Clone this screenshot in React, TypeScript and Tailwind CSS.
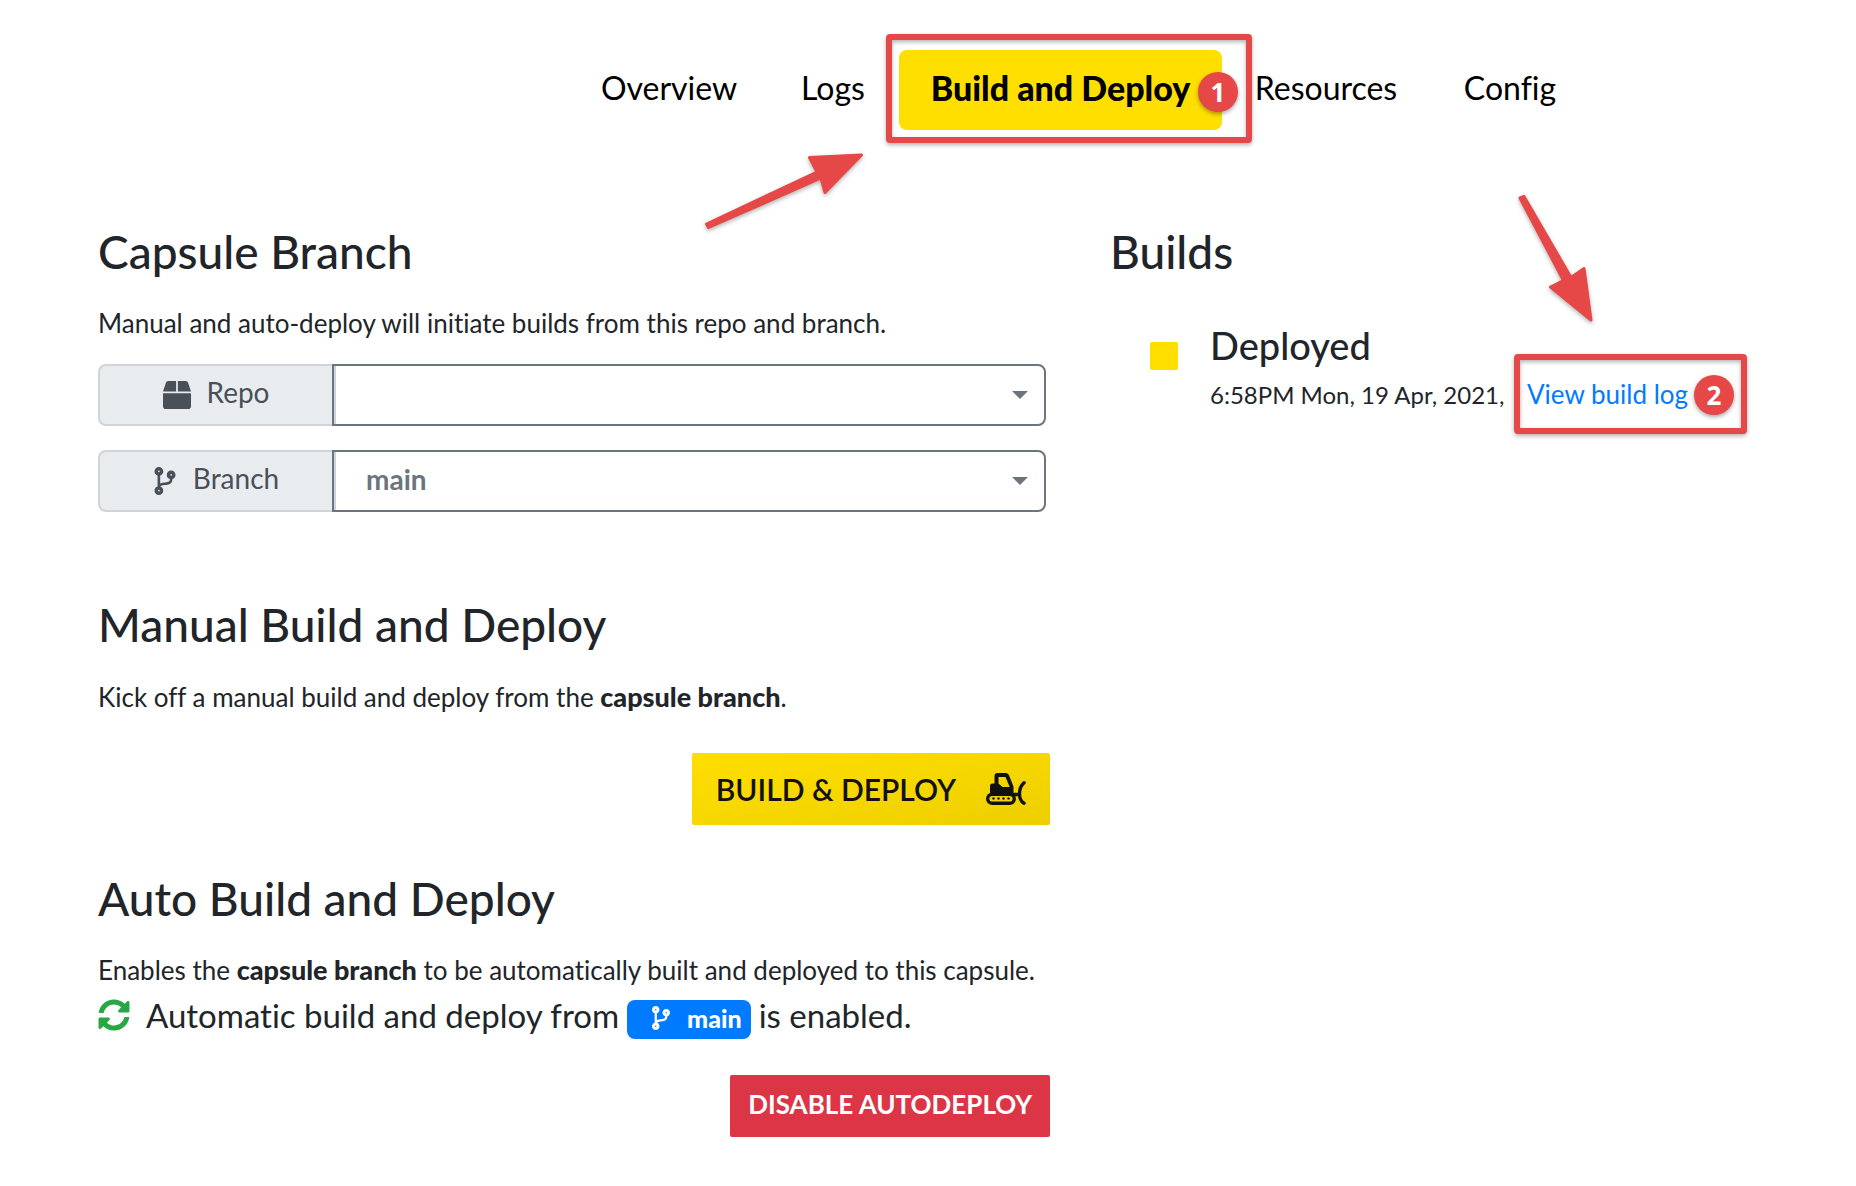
import type { ReactNode } from 'react';
import { FaBox, FaCodeBranch, FaSyncAlt } from 'react-icons/fa';

const navLink = 'flex h-20 items-center justify-center rounded-lg text-black';

function Badge({ children, className }: { children: ReactNode; className: string }) {
  return (
    <span
      className={`absolute flex size-10 items-center justify-center rounded-full bg-[#e64848] font-['Open_Sans',sans-serif] text-[26px] leading-none font-bold text-white shadow-[0_2px_4px_rgba(0,0,0,0.35)] ${className}`}
    >
      {children}
    </span>
  );
}

function Frame({ className }: { className: string }) {
  return (
    <span
      aria-hidden="true"
      className={`pointer-events-none absolute rounded border-6 border-[#e64848] drop-shadow-[0_2px_2px_rgba(0,0,0,0.3)] ${className}`}
    />
  );
}

function Arrow({ className, box, d }: { className: string; box: string; d: string }) {
  return (
    <svg
      aria-hidden="true"
      viewBox={box}
      className={`pointer-events-none absolute drop-shadow-[0_2px_2px_rgba(0,0,0,0.3)] ${className}`}
    >
      <path d={d} fill="#e64848" stroke="#e64848" strokeWidth="3" strokeLinejoin="round" />
    </svg>
  );
}

function Bulldozer() {
  return (
    <svg aria-hidden="true" viewBox="0 0 40 32" className="h-8 w-10" fill="none">
      <path
        fill="#111"
        fillRule="evenodd"
        d="M8.500 10.500V3q0-3 3-3h8q2.500 0 3.400 2l4.600 11.500v7H4V13q0-2.500 2.500-2.500ZM12.500 4v6.500l4 3.500h7.200L19.500 4Z"
      />
      <rect x="1.700" y="21.200" width="26.600" height="9.100" rx="4.550" stroke="#111" strokeWidth="3.400" />
      <g fill="#111">
        <circle cx="7.500" cy="25.500" r="1.200" />
        <circle cx="12.500" cy="25.500" r="1.200" />
        <circle cx="17.500" cy="25.500" r="1.200" />
        <circle cx="22.500" cy="25.500" r="1.200" />
      </g>
      <path d="M28 21.500h5.500M38 9.700q-4.500 4-4.500 11t4.500 9.500" stroke="#111" strokeWidth="3.400" strokeLinecap="round" />
    </svg>
  );
}

function SectionTitle({ children }: { children: ReactNode }) {
  return <h2 className="text-[46px] leading-14 font-medium">{children}</h2>;
}

function SelectRow({ id, label, icon, options }: { id: string; label: string; icon: ReactNode; options: string[] }) {
  return (
    <div className="mr-1 flex h-[62px]">
      <label
        htmlFor={id}
        className="flex w-[234px] items-center justify-center gap-4 rounded-l-lg border-2 border-r-0 border-[#ced4da] bg-[#e9ecef] text-[28px] text-[#495057]"
      >
        {icon}
        <span className="pb-1.5">{label}</span>
      </label>
      <div className="relative flex-1">
        <select
          id={id}
          className="size-full appearance-none rounded-r-lg border-2 border-[#6c757d] bg-white px-8 pb-1 text-[28px] font-bold text-[#6c757d] shadow-[inset_2px_0_0_#ced4da]"
        >
          {options.map((o) => (
            <option key={o}>{o}</option>
          ))}
        </select>
        <svg
          aria-hidden="true"
          viewBox="0 0 16 8"
          className="pointer-events-none absolute top-[27px] right-[18px] h-2 w-4 fill-[#6c757d]"
        >
          <path d="M0 0h16L8 8z" />
        </svg>
      </div>
    </div>
  );
}

export default function App() {
  return (
    <div className="min-h-screen bg-white pb-12 font-['Lato',sans-serif] text-[#212529] [font-variant-ligatures:none]">
      <nav className="flex pt-[50px] pl-[571px] whitespace-nowrap">
        <a href="#overview" className={`${navLink} w-[196px] pb-1 text-[32px]`}>
          Overview
        </a>
        <a href="#logs" className={`${navLink} w-[132px] pb-1 text-[32px]`}>
          Logs
        </a>
        <div className="relative">
          <a
            href="#build"
            aria-current="page"
            className={`${navLink} w-[323px] bg-[#ffdf00] pb-1.5 text-[34px] font-black`}
          >
            Build and Deploy
          </a>
          <Frame className="-top-4 -right-[30px] -bottom-[13px] -left-[13px]" />
          <Badge className="top-[22px] -right-4">1</Badge>
          <Arrow
            className="top-[98px] -left-[200px] h-[90px] w-[175px]"
            box="699 148 175 90"
            d="M706.500 224L817 172L809.500 157.500L861.500 155L825 192.500L821 178L708.500 227.500Z"
          />
        </div>
        <a href="#resources" className={`${navLink} w-[208px] pb-1 text-[32px]`}>
          Resources
        </a>
        <a href="#config" className={`${navLink} w-[160px] pb-1 text-[32px]`}>
          Config
        </a>
      </nav>

      <main className="mt-[94px] grid grid-cols-[952fr_648fr] gap-[60px] px-[98px]">
        <div>
          <section>
            <SectionTitle>Capsule Branch</SectionTitle>
            <p className="mt-[23px] text-[26px] leading-10">
              Manual and auto-deploy will initiate builds from this repo and branch.
            </p>
            <div className="mt-[21px] flex flex-col gap-6">
              <SelectRow id="repo" label="Repo" icon={<FaBox className="size-7" />} options={['']} />
              <SelectRow id="branch" label="Branch" icon={<FaCodeBranch className="h-7 w-6" />} options={['main']} />
            </div>
          </section>

          <section className="mt-[85px]">
            <SectionTitle>Manual Build and Deploy</SectionTitle>
            <p className="mt-6 text-[26px] leading-10">
              Kick off a manual build and deploy from the{' '}
              <strong className="text-[27px] font-black">capsule branch</strong>.
            </p>
            <div className="mt-9 flex justify-end">
              <button
                type="button"
                className="flex h-[72px] items-center gap-[30px] rounded-xs bg-linear-to-br from-[#ffdf00] to-[#edcf00] px-6 text-[30px] font-semibold text-[#111]"
              >
                BUILD &amp; DEPLOY
                <Bulldozer />
              </button>
            </div>
          </section>

          <section className="mt-[46px]">
            <SectionTitle>Auto Build and Deploy</SectionTitle>
            <p className="mt-[23px] text-[26px] leading-10">
              Enables the <strong className="text-[27px] font-black">capsule branch</strong> to be automatically built
              and deployed to this capsule.
            </p>
            <p className="mt-px flex h-12 items-center text-[33px] leading-12">
              <FaSyncAlt className="mr-4 size-8 text-[#28a745]" />
              Automatic build and deploy from
              <span className="mx-2 mt-2 flex h-[39px] items-center gap-4 rounded-lg bg-[#007bff] pr-[9px] pb-0.5 pl-6 text-[25px] font-black text-white">
                <FaCodeBranch className="h-6 w-5" />
                main
              </span>
              is enabled.
            </p>
            <div className="mt-9 flex justify-end">
              <button
                type="button"
                className="flex h-[62px] items-center rounded-xs bg-[#dc3545] px-[18px] pb-1 text-[26px] font-bold text-white"
              >
                DISABLE AUTODEPLOY
              </button>
            </div>
          </section>
        </div>

        <section>
          <SectionTitle>Builds</SectionTitle>
          <div className="mt-[42px] flex gap-8 pl-10">
            <span className="mt-5 size-7 shrink-0 rounded-xs bg-[#ffdf00]" />
            <div>
              <h3 className="text-[38px] leading-[46px] font-medium">Deployed</h3>
              <div className="mt-[6px] flex items-baseline gap-4 text-[26px] leading-10 whitespace-nowrap">
                <span className="w-[301px] text-[24px]">6:58PM Mon, 19 Apr, 2021,</span>
                <span className="relative">
                  <a href="#build-log" className="text-[#007bff]">
                    View build log
                  </a>
                  <Frame className="-top-5 -right-[59px] -bottom-5 -left-[13px]" />
                  <Badge className="top-px -right-[46px]">2</Badge>
                  <Arrow
                    className="-top-[184px] -left-[17px] h-[140px] w-[90px]"
                    box="1510 190 90 140"
                    d="M1520 198L1563.500 280.500L1550.500 287L1591 320L1584 268.500L1571 277.500L1524 196.500Z"
                  />
                </span>
              </div>
            </div>
          </div>
        </section>
      </main>
    </div>
  );
}
